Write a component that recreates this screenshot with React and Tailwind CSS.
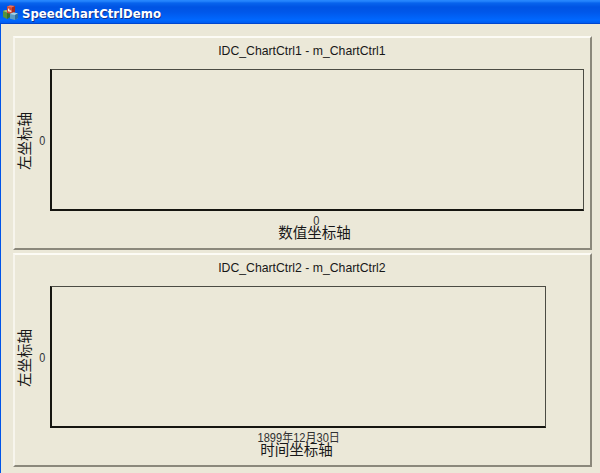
const sans = "font-['Liberation_Sans','Noto_Sans_CJK_SC',sans-serif]";
const cjk = "font-['Noto_Sans_CJK_SC',sans-serif]";

function AppIcon() {
  return (
    <svg width="17" height="17" viewBox="0 0 17 17" className="shrink-0">
      <path d="M1 6 L4 5 L8 6 L8 12 L5 14 L1 12 Z" fill="#56923e" />
      <path d="M1 6 L4 5 L8 6 L5 7.500 Z" fill="#a3bf7c" />
      <path d="M5 7.500 L8 6 L8 12 L5 14 Z" fill="#35702f" />
      <path d="M5 1.500 L8 0.500 L13 1 L13 7 L10 9 L5 8 Z" fill="#d24a37" />
      <path d="M5 1.500 L8 0.500 L13 1 L10 2.500 Z" fill="#e8745c" />
      <path d="M10 2.500 L13 1 L13 7 L10 9 Z" fill="#a92a1e" />
      <path d="M6 3.500 L7.300 3.700 L7.300 5.200 L9.300 5.500 L9.300 6.900 L6 6.300 Z" fill="#f8eee6" />
      <path d="M8 9 L11 7.500 L16 8.300 L16 13 L13 15 L8 13.800 Z" fill="#5b9cc6" />
      <path d="M8 9 L11 7.500 L16 8.300 L13 10 Z" fill="#a9d3e6" />
      <path d="M13 10 L16 8.300 L16 13 L13 15 Z" fill="#2b6ea3" />
    </svg>
  );
}

function Chart({ title, tick, axis, plotWidth, tickClass }) {
  return (
    <section className="flex h-[214px] w-[579px] flex-col border-2 border-t-[#fcfbf5] border-r-[#8b887b] border-b-[#8b887b] border-l-[#f7f5ed]">
      <h2 className="flex h-[31px] shrink-0 justify-center pt-[5px] pr-[1px] text-[13px] leading-[16px] font-normal">
        <span className="origin-center scale-x-[0.942] whitespace-nowrap">{title}</span>
      </h2>
      <div className="flex h-[142px] shrink-0">
        <div className="flex w-[18px] items-center justify-center pt-[2px]">
          <span className={`${cjk} -rotate-90 text-[14.5px] leading-[18px] whitespace-nowrap`}>左坐标轴</span>
        </div>
        <div className="flex w-[17px] items-center justify-center pt-[2px] pl-[1px] text-[12px] text-[#303337]">
          <span className="scale-x-90">0</span>
        </div>
        <div className={`${plotWidth} border-t border-r border-b-2 border-l-2 border-t-[#4b4b43] border-r-[#4b4b43] border-b-[#151510] border-l-[#151510]`} />
      </div>
      <div className={`flex flex-col items-center pt-[4px] ${tickClass}`}>
        <span className="h-[8px] scale-x-[0.92] text-[12px] leading-[13px] whitespace-nowrap text-[#303030]">{tick}</span>
        <span className={`${cjk} mr-[4px] text-[14.5px] leading-[18px] whitespace-nowrap`}>{axis}</span>
      </div>
    </section>
  );
}

export default function App() {
  return (
    <div className={`${sans} flex h-[473px] w-[600px] flex-col overflow-hidden bg-[#ebe8d8] text-[#171717]`}>
      <header className="flex h-[24px] shrink-0 items-center border-b border-[#0046cf] bg-[linear-gradient(to_bottom,#2686fd_0px,#2686fd_1px,#0864ed_3px,#0054e3_7px,#0057ea_12px,#0068ff_20px,#005cf0_23px)] pt-[4px] pl-[2px]">
        <AppIcon />
        <h1 className="ml-[3px] origin-left scale-x-[0.974] font-['DejaVu_Sans','Noto_Sans',sans-serif] text-[12px] leading-[14px] font-bold whitespace-nowrap text-white [text-shadow:1px_1px_0_#12308c]">
          SpeedChartCtrlDemo
        </h1>
      </header>
      <main className="flex flex-1 flex-col gap-[3px] border-l border-[#0054e8] pt-[12px] pl-[12px]">
        <Chart title="IDC_ChartCtrl1 - m_ChartCtrl1" tick="0" axis="数值坐标轴" plotWidth="w-[534px]" tickClass="pl-[28px]" />
        <Chart title="IDC_ChartCtrl2 - m_ChartCtrl2" tick="1899年12月30日" axis="时间坐标轴" plotWidth="w-[496px]" tickClass="pr-[8px]" />
      </main>
    </div>
  );
}
